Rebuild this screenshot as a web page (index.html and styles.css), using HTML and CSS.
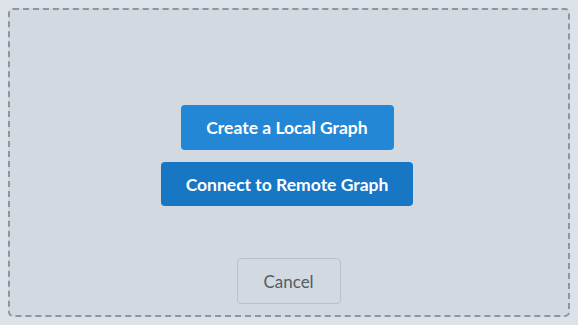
FILE: index.html
```html
<!DOCTYPE html>
<html>
<head>
<meta charset="utf-8">
<link rel="stylesheet" href="styles.css">
</head>
<body>
<div class="dropzone">
  <div class="actions">
    <button class="btn btn-local">Create a Local Graph</button>
    <button class="btn btn-remote">Connect to Remote Graph</button>
  </div>
  <button class="btn-cancel">Cancel</button>
</div>
</body>
</html>
```
FILE: styles.css
```css
html, body {
  height: 100%;
}
body {
  margin: 8px;
  background: #dde2e9;
  font-family: Lato, "Open Sans", sans-serif;
  box-sizing: border-box;
}
.dropzone {
  box-sizing: border-box;
  height: 309px;
  border: 2px dashed #8a96a3;
  border-radius: 5px;
  background: #d2d9e0;
  display: flex;
  flex-direction: column;
  align-items: center;
  padding-top: 95px;
  padding-right: 4px;
}
.actions {
  display: flex;
  flex-direction: column;
  align-items: center;
  gap: 12px;
}
.btn {
  border: none;
  color: #fff;
  font-family: Lato, sans-serif;
  font-weight: bold;
  font-size: 17.5px;
  height: 44px;
  border-radius: 4px;
  padding: 0 20px;
}
.btn-local {
  background: #2387d5;
  width: 213px;
  height: 45px;
}
.btn-remote {
  background: #1777c4;
  width: 252px;
}
.btn-cancel {
  margin-top: 52px;
  margin-left: 3px;
  width: 104px;
  height: 46px;
  background: transparent;
  border: 1px solid #b8c0ca;
  border-radius: 4px;
  color: #555c65;
  font-family: Lato, sans-serif;
  font-size: 17px;
}
```
